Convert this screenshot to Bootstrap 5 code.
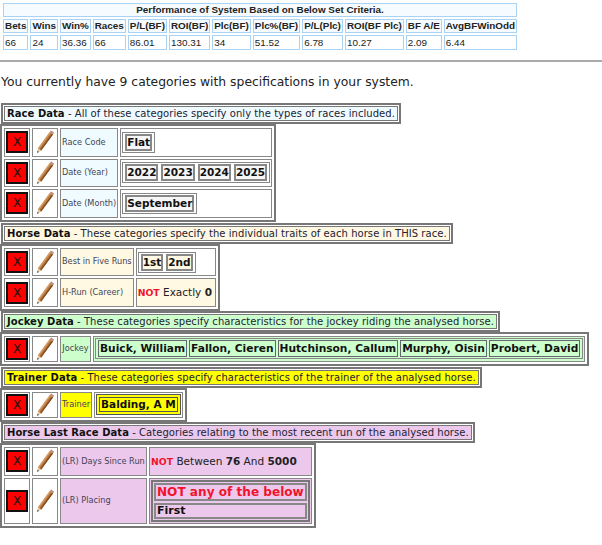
<!DOCTYPE html>
<html lang="en">
<head>
<meta charset="utf-8">
<title>System Criteria</title>
<link rel="stylesheet" href="https://cdn.jsdelivr.net/npm/bootstrap@5.3.0/dist/css/bootstrap.min.css">
<style>
body{background:#fff;color:#111;font-family:"DejaVu Sans",sans-serif;font-size:10px;line-height:1.15;padding:1px 1px 0;overflow:hidden}
table{border-collapse:separate;border-spacing:2px}
.perf{margin-left:0;font-family:"Liberation Sans",sans-serif;font-size:9.9px;color:#222}
.perf td,.perf th{border:1px solid #a9d3f5;padding:0 1px;height:14px;line-height:12px;white-space:nowrap;font-weight:400}
.perf th{font-weight:700;background:#f6fbff}
.perf .ttl{text-align:center}
.perf .vals td{height:15px}
.sep{height:2px;background:#aaa;margin:8px -1px 0;opacity:1;border:0}
.intro{font-size:12.35px;margin:12px 0 12px;color:#222;line-height:17px}
.cathead{display:inline-block;border:2px solid #777;padding:1px;vertical-align:top}
.cathead span{display:block;border:1px solid #777;padding:0 2px;line-height:13px;white-space:nowrap;letter-spacing:.005em;color:#223}
.cathead b{font-weight:700;color:#111}
.hr1 span{background:#f0fbff}.hr2 span{background:#fff8e3}.hr3 span{background:#ccffcc}.hr4 span{background:#ffff00}.hr5 span{background:#ebc8ec}
.rowline{line-height:0}
.crit{display:table;border:2px solid #777;border-spacing:2px;margin:0 0 1px -1px}
.crit.t2,.crit.t4{margin-bottom:0}
.crit>tbody>tr>td{border:1px solid #888;padding:0;vertical-align:middle;height:28.6px}
.t3>tbody>tr>td,.t4>tbody>tr>td{height:25px!important}
.c-x{width:26px;min-width:26px;text-align:center;background:#fff}
.c-p{width:26px;min-width:26px;text-align:center;background:#fff}
.c-p svg{display:block;margin:auto}
.xbtn{display:inline-block;width:22px;height:22px;background:#f00;border:2px solid #111;color:#111;font-size:12px;line-height:18px;text-align:center;vertical-align:middle}
.lbl{font-size:8.2px;color:#445;padding:0 1px!important;white-space:nowrap}
.val{padding:1px!important;font-size:10.5px;white-space:nowrap}
.t1 .lbl{background:#f0fbff;width:58px}.t1 .val{width:152px;background:#fff}
.t2 .lbl{background:#fff8e3;width:73px}.t2 .val{width:80px;background:#fff}.t2 .tint{background:#fff8e3}
.t3 .lbl{background:#ccffcc;width:31px;text-align:center}.t3 .val{background:#ccffcc}
.t4 .lbl{background:#ffff00;width:31px;text-align:center}.t4 .val{background:#fff;width:88px}
.t5 .lbl{background:#ebc8ec;width:87px}.t5 .val{background:#ebc8ec;width:163px}
.chips{display:inline-flex;gap:3px;border:1px solid #888;padding:1px 2px;vertical-align:middle}
.chips b{display:block;border:2px solid #888;padding:0;line-height:13px;font-weight:700;color:#111;font-size:10.5px}
.g3{gap:2px}
.g3 b{background:#ccffcc;border-width:1px;border-color:#667;padding:1px;font-size:10.65px}
.g4{padding:2px;border-color:#555;background:#ffff00}
.g4 b{background:#ffff00;border-color:#555;border-width:1px;padding:0 1px}
.g2 b{background:#fff8e3}
.g1 b{background:#f6f6f6}
.g5{display:block;border:2px solid #777;padding:1px}
.g5 div{border:2px solid #888;padding:0 1px;margin-top:2px;font-size:11px;font-weight:700;line-height:12px}
.g5 div:first-child{margin-top:0;color:#f0142c;font-size:12.1px;line-height:14px}
.neg{color:#f0142c;font-weight:700;font-size:9.3px}
.crit .val .plain{color:#222}
</style>
</head>
<body>
<svg width="0" height="0" class="d-block" aria-hidden="true"><defs>
<symbol id="pencil" viewBox="0 0 18 24">
<polygon points="1,23 2,18.2 5.2,20.6" fill="#e3c9a3"/>
<polygon points="1,23 1.5,20.8 3,21.9" fill="#555"/>
<polygon points="2,18.2 13.8,2 17,4.4 5.2,20.6" fill="#b5773d"/>
<polygon points="2,18.2 13.8,2 14.8,2.8 3,19" fill="#d9a066"/>
<polygon points="4.2,19.8 16,3.6 17,4.4 5.2,20.6" fill="#7d4c22"/>
<polygon points="13.8,2 15,0.4 18,2.6 17,4.4" fill="#c08a78"/>
</symbol></defs></svg>

<table class="perf">
<tr><th colspan="12" class="ttl">Performance of System Based on Below Set Criteria.</th></tr>
<tr><th>Bets</th><th>Wins</th><th>Win%</th><th>Races</th><th>P/L(BF)</th><th>ROI(BF)</th><th>Plc(BF)</th><th>Plc%(BF)</th><th>P/L(Plc)</th><th>ROI(BF Plc)</th><th>BF A/E</th><th>AvgBFWinOdd</th></tr>
<tr class="vals"><td>66</td><td>24</td><td>36.36</td><td>66</td><td>86.01</td><td>130.31</td><td>34</td><td>51.52</td><td>6.78</td><td>10.27</td><td>2.09</td><td>6.44</td></tr>
</table>
<hr class="sep">
<p class="intro">You currently have 9 categories with specifications in your system.</p>

<div class="rowline"><div class="cathead hr1"><span><b>Race Data</b> - All of these categories specify only the types of races included.</span></div></div>
<table class="crit t1"><tbody>
<tr><td class="c-x"><span class="xbtn">X</span></td><td class="c-p"><svg width="18" height="24"><use href="#pencil"/></svg></td><td class="lbl">Race Code</td><td class="val"><span class="chips g1"><b>Flat</b></span></td></tr>
<tr><td class="c-x"><span class="xbtn">X</span></td><td class="c-p"><svg width="18" height="24"><use href="#pencil"/></svg></td><td class="lbl">Date (Year)</td><td class="val"><span class="chips g1"><b>2022</b><b>2023</b><b>2024</b><b>2025</b></span></td></tr>
<tr><td class="c-x"><span class="xbtn">X</span></td><td class="c-p"><svg width="18" height="24"><use href="#pencil"/></svg></td><td class="lbl">Date (Month)</td><td class="val"><span class="chips g1"><b>September</b></span></td></tr>
</tbody></table>

<div class="rowline"><div class="cathead hr2"><span><b>Horse Data</b> - These categories specify the individual traits of each horse in THIS race.</span></div></div>
<table class="crit t2"><tbody>
<tr><td class="c-x"><span class="xbtn">X</span></td><td class="c-p"><svg width="18" height="24"><use href="#pencil"/></svg></td><td class="lbl">Best in Five Runs</td><td class="val"><span class="chips g2"><b>1st</b><b>2nd</b></span></td></tr>
<tr><td class="c-x"><span class="xbtn">X</span></td><td class="c-p"><svg width="18" height="24"><use href="#pencil"/></svg></td><td class="lbl">H-Run (Career)</td><td class="val tint"><span class="neg">NOT</span> <span class="plain">Exactly <b>0</b></span></td></tr>
</tbody></table>

<div class="rowline"><div class="cathead hr3"><span><b>Jockey Data</b> - These categories specify characteristics for the jockey riding the analysed horse.</span></div></div>
<table class="crit t3"><tbody>
<tr><td class="c-x"><span class="xbtn">X</span></td><td class="c-p"><svg width="18" height="24"><use href="#pencil"/></svg></td><td class="lbl">Jockey</td><td class="val"><span class="chips g3"><b>Buick, William</b><b>Fallon, Cieren</b><b>Hutchinson, Callum</b><b>Murphy, Oisin</b><b>Probert, David</b></span></td></tr>
</tbody></table>

<div class="rowline"><div class="cathead hr4"><span><b>Trainer Data</b> - These categories specify characteristics of the trainer of the analysed horse.</span></div></div>
<table class="crit t4"><tbody>
<tr><td class="c-x"><span class="xbtn">X</span></td><td class="c-p"><svg width="18" height="24"><use href="#pencil"/></svg></td><td class="lbl">Trainer</td><td class="val"><span class="chips g4"><b>Balding, A M</b></span></td></tr>
</tbody></table>

<div class="rowline"><div class="cathead hr5"><span><b>Horse Last Race Data</b> - Categories relating to the most recent run of the analysed horse.</span></div></div>
<table class="crit t5"><tbody>
<tr><td class="c-x"><span class="xbtn">X</span></td><td class="c-p"><svg width="18" height="24"><use href="#pencil"/></svg></td><td class="lbl">(LR) Days Since Run</td><td class="val"><span class="neg">NOT</span> <span class="plain">Between <b>76</b> And <b>5000</b></span></td></tr>
<tr><td class="c-x"><span class="xbtn">X</span></td><td class="c-p"><svg width="18" height="24"><use href="#pencil"/></svg></td><td class="lbl">(LR) Placing</td><td class="val"><span class="g5"><div>NOT any of the below</div><div>First</div></span></td></tr>
</tbody></table>
<script src="https://cdn.jsdelivr.net/npm/bootstrap@5.3.0/dist/js/bootstrap.bundle.min.js"></script>
</body>
</html>
